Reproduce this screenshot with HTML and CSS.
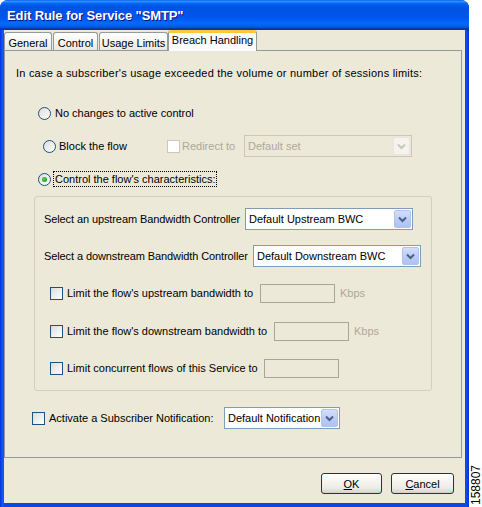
FILE: index.html
```html
<!DOCTYPE html>
<html>
<head>
<meta charset="utf-8">
<link rel="stylesheet" href="styles.css">
</head>
<body>
<div class="screen">
  <div class="window">
    <div class="titlebar"><span class="title">Edit Rule for Service "SMTP"</span></div>
    <div class="client">
      <div class="tabs">
        <div class="tab t-general">General</div>
        <div class="tab t-control">Control</div>
        <div class="tab t-usage">Usage Limits</div>
        <div class="tab active t-breach">Breach Handling</div>
      </div>
      <div class="panel">
        <p class="intro">In case a subscriber's usage exceeded the volume or number of sessions limits:</p>

        <div class="row r1"><span class="radio"></span><span class="lbl">No changes to active control</span></div>

        <div class="row r2">
          <span class="radio"></span><span class="lbl w-block">Block the flow</span>
          <span class="check disabled"></span><span class="lbl dis w-redir">Redirect to</span>
          <div class="combo disabled w-set"><span class="val">Default set</span><span class="arrow"><svg width="9" height="7" viewBox="0 0 9 7"><path d="M1 1.5 L4.5 5 L8 1.5" fill="none" stroke="#C9C7BA" stroke-width="2"/></svg></span></div>
        </div>

        <div class="row r3"><span class="radio checked"><span class="dot"></span></span><span class="lbl focus">Control the flow's characteristics:</span></div>

        <div class="group">
          <div class="grow g1">
            <span class="lbl w-up">Select an upstream Bandwidth Controller</span>
            <div class="combo w-bwc"><span class="val">Default Upstream BWC</span><span class="arrow"><svg width="9" height="7" viewBox="0 0 9 7"><path d="M1 1.5 L4.5 5 L8 1.5" fill="none" stroke="#4D6185" stroke-width="2"/></svg></span></div>
          </div>
          <div class="grow g2">
            <span class="lbl w-down">Select a downstream Bandwidth Controller</span>
            <div class="combo w-bwc"><span class="val">Default Downstream BWC</span><span class="arrow"><svg width="9" height="7" viewBox="0 0 9 7"><path d="M1 1.5 L4.5 5 L8 1.5" fill="none" stroke="#4D6185" stroke-width="2"/></svg></span></div>
          </div>
          <div class="grow c1">
            <span class="check"></span><span class="lbl w-lim1">Limit the flow's upstream bandwidth to</span>
            <span class="input"></span><span class="lbl dis unit">Kbps</span>
          </div>
          <div class="grow c2">
            <span class="check"></span><span class="lbl w-lim2">Limit the flow's downstream bandwidth to</span>
            <span class="input"></span><span class="lbl dis unit">Kbps</span>
          </div>
          <div class="grow c3">
            <span class="check"></span><span class="lbl w-lim3">Limit concurrent flows of this Service to</span>
            <span class="input"></span>
          </div>
        </div>

        <div class="row act">
          <span class="check"></span><span class="lbl w-act">Activate a Subscriber Notification:</span>
          <div class="combo w-notif"><span class="val">Default Notification</span><span class="arrow"><svg width="9" height="7" viewBox="0 0 9 7"><path d="M1 1.5 L4.5 5 L8 1.5" fill="none" stroke="#4D6185" stroke-width="2"/></svg></span></div>
        </div>
      </div>
      <div class="buttons">
        <div class="btn b-ok"><u>O</u>K</div>
        <div class="btn b-cancel"><u>C</u>ancel</div>
      </div>
    </div>
  </div>
  <div class="side"><span class="fig">158807</span></div>
</div>
</body>
</html>
```

FILE: styles.css
```css
html, body {
  margin: 0;
  padding: 0;
  background: #ffffff;
}
body {
  font-family: "Liberation Sans", Arial, sans-serif;
  font-size: 11px;
  color: #000;
}
.screen {
  display: flex;
  width: 482px;
  height: 507px;
}
.window {
  width: 469px;
  height: 507px;
  display: flex;
  flex-direction: column;
  background: linear-gradient(to right, #0831D9 0, #0B52F0 2px, #1660EE 3px, #0A48E0 4px, #0A48E0 465px, #0B4FEA 466px, #0831D9 469px);
  border-radius: 8px 8px 0 0;
  overflow: hidden;
  flex: none;
}
.titlebar {
  height: 30px;
  flex: none;
  display: flex;
  align-items: center;
  padding: 1px 0 0 7px;
  box-sizing: border-box;
  background: linear-gradient(to bottom, #0058EE 0%, #3593FF 4%, #288EFF 6%, #127DFF 8%, #036FFC 10%, #0262EE 14%, #0057E5 20%, #0054E3 24%, #0055EB 56%, #005BF5 66%, #026AFE 76%, #0062EF 86%, #0052D6 92%, #0040AB 94%, #003092 100%);
}
.title {
  color: #fff;
  font-weight: bold;
  font-size: 13px;
  text-shadow: 1px 1px #0F1089;
  letter-spacing: -0.1px;
}
.client {
  flex: 1;
  margin: 0 4px 4px 4px;
  background: #ECE9D8;
  display: flex;
  flex-direction: column;
}
.tabs {
  height: 20px;
  display: flex;
  align-items: flex-end;
  position: relative;
  z-index: 1;
}
.tab {
  height: 18px;
  box-sizing: border-box;
  border: 1px solid #919B9C;
  border-bottom: none;
  border-radius: 3px 3px 0 0;
  background: linear-gradient(to bottom, #FFFFFF, #F3F3EF 60%, #E9E8E2);
  display: flex;
  align-items: center;
  justify-content: center;
  padding-top: 2px;
}
.t-general { width: 48px; margin-right: 1px; }
.t-control { width: 45px; margin-right: 1px; }
.t-usage { width: 69px; margin-right: 0; }
.tab.active {
  height: 21px;
  margin-bottom: -1px;
  background: #FCFCFE;
  border-top: 3px solid #FFC83C;
  align-items: flex-start;
  padding-top: 1px;
}
.t-breach { width: 89px; }
.panel {
  height: 408px;
  box-sizing: border-box;
  margin-right: 3px;
  border: 1px solid #919B9C;
  background: #ECE9D8;
  display: flex;
  flex-direction: column;
  align-items: flex-start;
}
.intro {
  margin: 15px 0 0 11px;
  line-height: 14px;
  height: 14px;
  letter-spacing: 0.22px;
}
.row {
  height: 22px;
  display: flex;
  align-items: center;
}
.r1 { margin-top: 22px; padding-left: 33px; }
.r2 { margin-top: 11px; padding-left: 38px; }
.r3 { margin-top: 11px; padding-left: 33px; }
.act { margin-top: 16px; padding-left: 27px; }

.radio {
  width: 13px;
  height: 13px;
  box-sizing: border-box;
  border: 1px solid #1C5180;
  border-radius: 50%;
  background: linear-gradient(135deg, #DCDCD7, #FFFFFF);
  display: flex;
  align-items: center;
  justify-content: center;
  flex: none;
}
.dot {
  width: 5px;
  height: 5px;
  border-radius: 50%;
  background: radial-gradient(circle at 40% 40%, #55D35B, #21A121 70%);
}
.check {
  width: 13px;
  height: 13px;
  box-sizing: border-box;
  border: 1px solid #1C5180;
  background: linear-gradient(135deg, #DCDCD7, #FFFFFF);
  flex: none;
}
.check.disabled {
  border-color: #CAC8BB;
  background: #FFFFFF;
}
.lbl {
  margin-left: 4px;
  white-space: nowrap;
  line-height: 14px;
}
.r2 .lbl { margin-left: 3px; }
.lbl.dis { color: #ACA899; }
.lbl.focus {
  outline: 1px dotted #000;
  outline-offset: 0;
  padding: 0 1px;
  margin-left: 3px;
}
.w-block { width: 108px; }
.w-redir { width: 62px; margin-left: 2px !important; }

.combo {
  height: 22px;
  box-sizing: border-box;
  border: 1px solid #7F9DB9;
  background: #FFFFFF;
  display: flex;
  align-items: center;
  justify-content: space-between;
  padding: 1px;
  flex: none;
}
.combo .val {
  padding-left: 2px;
  white-space: nowrap;
  line-height: 14px;
}
.arrow {
  width: 17px;
  height: 18px;
  box-sizing: border-box;
  border: 1px solid #B2C2EE;
  border-radius: 2px;
  background: linear-gradient(to bottom, #D4DEF9, #B9CAF5 60%, #AFC2F2);
  display: flex;
  align-items: center;
  justify-content: center;
  flex: none;
}
.combo.disabled {
  border-color: #C9C7BA;
  background: #ECE9D8;
}
.combo.disabled .val { color: #ACA899; }
.combo.disabled .arrow {
  border-color: #E8E6DC;
  background: #F4F3EE;
}
.w-set { width: 168px; }
.w-bwc { width: 168px; }
.w-notif { width: 116px; }

.group {
  margin: 6px 0 0 29px;
  width: 398px;
  box-sizing: border-box;
  border: 1px solid #D0D0BF;
  border-radius: 3px;
  padding: 0 0 11px 0;
  display: flex;
  flex-direction: column;
}
.grow {
  height: 22px;
  display: flex;
  align-items: center;
}
.g1 { margin-top: 11px; padding-left: 9px; }
.g2 { margin-top: 15px; padding-left: 9px; }
.c1 { margin-top: 15px; padding-left: 15px; }
.c2 { margin-top: 16px; padding-left: 15px; }
.c3 { margin-top: 15px; padding-left: 15px; }
.g1 .lbl, .g2 .lbl { margin-left: 0; letter-spacing: -0.1px; }
.w-up { width: 201px; }
.w-down { width: 209px; }
.w-lim1 { width: 193px; }
.w-lim2 { width: 207px; }
.w-lim3 { width: 197px; }
.w-act { width: 175px; }
.input {
  width: 75px;
  height: 19px;
  box-sizing: border-box;
  border: 1px solid #A7A69C;
  background: #ECE9D8;
  flex: none;
}
.unit { margin-left: 5px; }

.buttons {
  display: flex;
  justify-content: flex-end;
  gap: 9px;
  margin: 15px 11px 0 0;
}
.btn {
  height: 21px;
  box-sizing: border-box;
  border: 1px solid #003C74;
  border-radius: 3px;
  background: linear-gradient(to bottom, #FFFFFF, #F5F4EF 40%, #ECEBE6 75%, #D6D0C5);
  display: flex;
  align-items: center;
  justify-content: center;
  line-height: 14px;
}
.b-ok { width: 61px; }
.b-cancel { width: 63px; }

.side {
  flex: 1;
  display: flex;
  align-items: flex-end;
  justify-content: center;
  padding-bottom: 2px;
}
.fig {
  writing-mode: vertical-rl;
  transform: rotate(180deg);
  font-size: 12px;
  line-height: 12px;
  letter-spacing: 0;
}
```
